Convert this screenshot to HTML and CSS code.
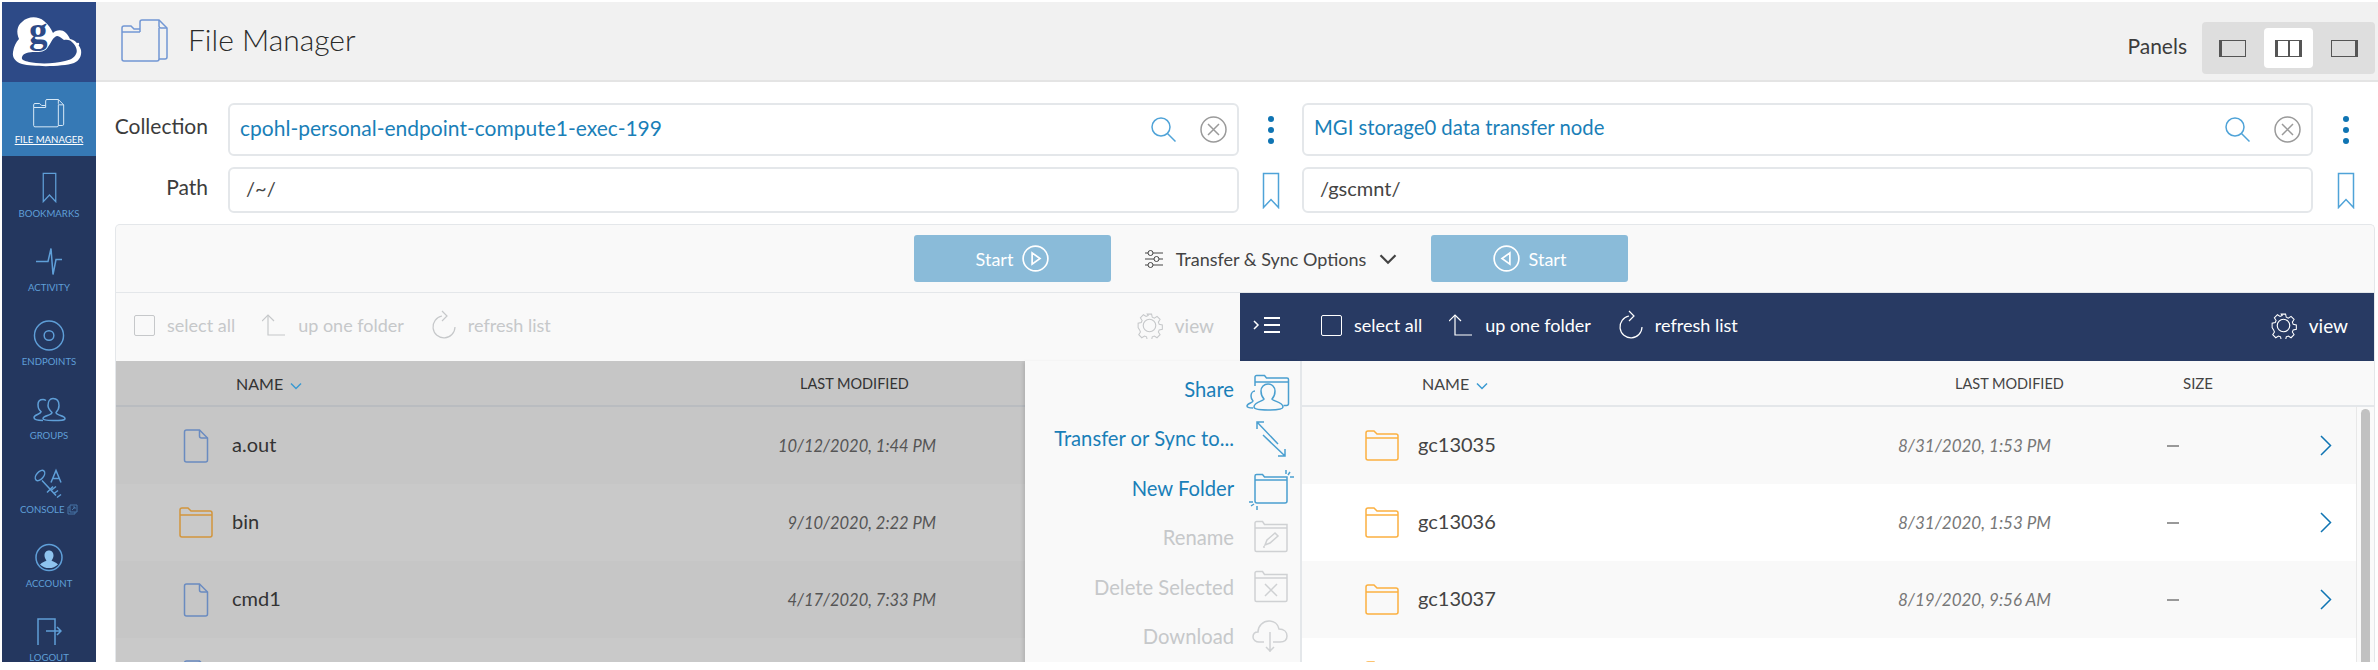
FILE: index.html
```html
<!DOCTYPE html>
<html lang="en">
<head>
  <meta charset="UTF-8" />
  <title>File Manager</title>
  <link rel="stylesheet" href="styles.css">
</head>
<body>
  <svg class="defs" width="0" height="0">
    <symbol id="i-folders" viewBox="0 0 48 44">
      <path d="M1 13V9a2 2 0 0 1 2-2h7l3 3h6" />
      <path d="M1 13h18" />
      <path d="M1 13v27a2 2 0 0 0 2 2h33a2 2 0 0 0 2-2V9" />
      <path d="M19 13V3a2 2 0 0 1 2-2h17l8 8v29a2 2 0 0 1-2 2h-6" />
      <path d="M38 1v6a2 2 0 0 0 2 2h6" />
    </symbol>
    <symbol id="i-file" viewBox="0 0 25 34">
      <path d="M3 1h13l8 8v22a2 2 0 0 1-2 2H3a2 2 0 0 1-2-2V3a2 2 0 0 1 2-2z" />
      <path d="M16 1v6a2 2 0 0 0 2 2h6" />
    </symbol>
    <symbol id="i-folder" viewBox="0 0 34 31">
      <path d="M1 28V3a2 2 0 0 1 2-2h6l3 3h19a2 2 0 0 1 2 2v22a2 2 0 0 1-2 2H3a2 2 0 0 1-2-2z" />
      <path d="M1 8h32" />
    </symbol>
    <symbol id="i-up" viewBox="0 0 24 24">
      <path d="M0 8l6-6 6 6" />
      <path d="M6 2v20h17" />
    </symbol>
    <symbol id="i-refresh" viewBox="0 0 25 30">
      <path d="M11 6a11 11 0 1 0 13 11" />
      <path d="M11 1l5 5-5 5" />
    </symbol>
    <symbol id="i-gear" viewBox="0 0 28 28">
      <circle cx="14" cy="14" r="6.500" />
      <path d="M11.500 1h5l.8 3.600 2.400 1 3.100-2 3.500 3.500-2 3.100 1 2.400 3.600.8v5l-3.600.8-1 2.400 2 3.100-3.500 3.500-3.100-2-2.400 1-.8 3.600h-5l-.8-3.600-2.400-1-3.100 2-3.500-3.500 2-3.100-1-2.400L1 16.500v-5l3.600-.8 1-2.400-2-3.100 3.500-3.500 3.100 2 2.400-1z" transform="translate(1.300 1.300) scale(.9)" />
    </symbol>
    <symbol id="i-bookmark" viewBox="0 0 18 37">
      <path d="M1.500 1.500h15v34L9 27.500l-7.500 8z" />
    </symbol>
    <symbol id="i-chev" viewBox="0 0 12 8">
      <path d="M1 1.500l5 5 5-5" />
    </symbol>
  </svg>

  <div class="app">
    <nav class="sidebar">
      <div class="logo">
        <svg width="94" height="80" viewBox="0 0 94 80">
          <path class="logo-cloud" d="M11 50C12 44 14 40 17 37C14 30 15 24 20 20C26 14 36 14 42 19C47 23 49 27 51 31C54 28 60 27 64 31C66 33 67 35 68 37C73 38 77 42 79 48C80 54 77 59 72 61C60 65 32 65 20 62C14 60 10 56 11 50Z" />
          <path class="logo-hole" d="M20 55C21 51 27 50 33 50C38 50 43 50 46 45C49 41 50 37 53 35C56 32 59 36 62 38C65 37 69 38 71 41C74 44 76 49 74 52C72 56 68 58 63 59C52 62 36 62 27 60C23 59 19 58 20 55Z" />
          <circle class="logo-cloud" cx="76" cy="42" r="1.200" />
          <text class="logo-g" x="27" y="41">g</text>
        </svg>
      </div>
      <a class="nav-item is-active">
        <svg class="nav-icon" width="32" height="29"><use href="#i-folders" /></svg>
        <span class="nav-label">FILE MANAGER</span>
      </a>
      <a class="nav-item">
        <svg class="nav-icon" width="15" height="31"><use href="#i-bookmark" /></svg>
        <span class="nav-label">BOOKMARKS</span>
      </a>
      <a class="nav-item">
        <svg class="nav-icon" width="26" height="28" viewBox="0 0 26 28"><path d="M0 14h12l3-13 2 26 3-15h6" /></svg>
        <span class="nav-label">ACTIVITY</span>
      </a>
      <a class="nav-item">
        <svg class="nav-icon" width="32" height="32" viewBox="0 0 32 32"><circle cx="16" cy="16" r="15" /><circle cx="16" cy="16" r="5" /></svg>
        <span class="nav-label">ENDPOINTS</span>
      </a>
      <a class="nav-item">
        <svg class="nav-icon" width="33" height="24" viewBox="0 0 33 24"><path d="M10 23c-5 0-9-1-9-3 0-3 7-3 7-6-3-2-3-4-3-7 0-3 2-5 5-5 1 0 2 .3 3 1" /><path d="M20 1c4 0 6 3 6 7 0 3-1 5-3 7 0 3 9 3 9 6 0 2-4 2-12 2s-10-1-10-2c0-3 9-3 9-6-2-2-4-4-4-7 0-4 2-7 5-7z" /></svg>
        <span class="nav-label">GROUPS</span>
      </a>
      <a class="nav-item">
        <svg class="nav-icon" width="32" height="30" viewBox="0 0 32 30"><ellipse cx="7" cy="7" rx="3.500" ry="6" transform="rotate(40 7 7)" /><path d="M9 12l14 15M17 21l-3 3M20 18l-3 3M21 25l4-3M18 22l5-4M24 29l4-3" /><path d="M18 14l5-12 5 12M20 10h6" /></svg>
        <span class="nav-label">CONSOLE <svg class="ext" width="11" height="11" viewBox="0 0 11 11"><path d="M3 1h7v7H3zM3 3H1v7h7V8M5 6l3-3M6 3h2v2" /></svg></span>
      </a>
      <a class="nav-item">
        <svg class="nav-icon" width="28" height="28" viewBox="0 0 28 28"><circle cx="14" cy="14" r="13" /><path class="solid" d="M14 7c3 0 4.500 2.300 4.500 5 0 2-1 3.800-2 5 1 1 4.500 1.500 6.500 4a13 13 0 0 1-18 0c2-2.500 5.500-3 6.500-4-1-1.200-2-3-2-5 0-2.700 1.500-5 4.500-5z" /></svg>
        <span class="nav-label">ACCOUNT</span>
      </a>
      <a class="nav-item">
        <svg class="nav-icon" width="25" height="27" viewBox="0 0 25 27"><path d="M1 27V1h17v26M9 13h15M20 9l4 4-4 4" /></svg>
        <span class="nav-label">LOGOUT</span>
      </a>
    </nav>

    <main class="main">
      <header class="topbar">
        <svg class="page-icon" width="48" height="44"><use href="#i-folders" /></svg>
        <h1 class="page-title">File Manager</h1>
        <span class="panels-label">Panels</span>
        <div class="panels">
          <button class="panel-btn"><span class="pane-glyph left-bar"></span></button>
          <button class="panel-btn is-on"><span class="pane-glyph split"></span></button>
          <button class="panel-btn"><span class="pane-glyph right-bar"></span></button>
        </div>
      </header>

      <section class="selectors">
        <label class="field-label">Collection</label>
        <div class="field collection">
          <span class="field-text long">cpohl-personal-endpoint-compute1-exec-199</span>
          <svg class="search" width="25" height="25" viewBox="0 0 25 25"><circle cx="10" cy="10" r="9" /><path d="M16.500 16.500l8 8" /></svg>
          <svg class="clear" width="27" height="27" viewBox="0 0 27 27"><circle cx="13.500" cy="13.500" r="12.500" /><path d="M8 8l11 11M19 8L8 19" /></svg>
        </div>
        <div class="kebab"><i></i><i></i><i></i></div>
        <div class="field collection">
          <span class="field-text">MGI storage0 data transfer node</span>
          <svg class="search" width="25" height="25" viewBox="0 0 25 25"><circle cx="10" cy="10" r="9" /><path d="M16.500 16.500l8 8" /></svg>
          <svg class="clear" width="27" height="27" viewBox="0 0 27 27"><circle cx="13.500" cy="13.500" r="12.500" /><path d="M8 8l11 11M19 8L8 19" /></svg>
        </div>
        <div class="kebab"><i></i><i></i><i></i></div>

        <label class="field-label">Path</label>
        <div class="field path"><span class="path-text">/~/</span></div>
        <div class="mark"><svg width="18" height="37"><use href="#i-bookmark" /></svg></div>
        <div class="field path"><span class="path-text">/gscmnt/</span></div>
        <div class="mark"><svg width="18" height="37"><use href="#i-bookmark" /></svg></div>
      </section>

      <section class="transfer">
        <div class="actions">
          <button class="start">Start
            <svg width="27" height="27" viewBox="0 0 24 24"><circle cx="12" cy="12" r="11" /><path d="M9 7l7 5-7 5z" /></svg>
          </button>
          <div class="options">
            <svg class="sliders" width="18" height="18" viewBox="0 0 18 18"><path d="M0 3h3M8 3h10M0 9h9M14 9h4M0 15h3M8 15h10" /><circle cx="5.500" cy="3" r="2.500" /><circle cx="11.500" cy="9" r="2.500" /><circle cx="5.500" cy="15" r="2.500" /></svg>
            <span>Transfer &amp; Sync Options</span>
            <svg class="opt-chev" width="18" height="12"><use href="#i-chev" /></svg>
          </div>
          <button class="start">
            <svg width="27" height="27" viewBox="0 0 24 24"><circle cx="12" cy="12" r="11" /><path d="M15 7l-7 5 7 5z" /></svg>
            Start
          </button>
        </div>

        <div class="toolbars">
          <div class="toolbar is-off">
            <span class="tool"><span class="check"></span>select all</span>
            <span class="tool"><svg width="24" height="24"><use href="#i-up" /></svg>up one folder</span>
            <span class="tool"><svg width="25" height="30"><use href="#i-refresh" /></svg>refresh list</span>
            <span class="tool view"><svg width="27" height="27"><use href="#i-gear" /></svg>view</span>
          </div>
          <div class="toolbar is-dark">
            <svg class="collapse" width="28" height="18" viewBox="0 0 28 18"><path d="M1 5l4 4-4 4" /><path class="thick" d="M11 2h16M11 9h16M11 16h16" /></svg>
            <span class="tool"><span class="check"></span>select all</span>
            <span class="tool"><svg width="24" height="24"><use href="#i-up" /></svg>up one folder</span>
            <span class="tool"><svg width="25" height="30"><use href="#i-refresh" /></svg>refresh list</span>
            <span class="tool view"><svg width="27" height="27"><use href="#i-gear" /></svg>view</span>
          </div>
        </div>

        <div class="lists">
          <div class="list is-dimmed">
            <div class="row head">
              <span class="c-name">NAME <svg class="sort" width="12" height="8"><use href="#i-chev" /></svg></span>
              <span class="c-date">LAST MODIFIED</span>
            </div>
            <div class="row item"><svg class="ic file" width="25" height="34"><use href="#i-file" /></svg><span class="c-file">a.out</span><span class="c-when">10/12/2020, 1:44 PM</span></div>
            <div class="row item"><svg class="ic folder" width="34" height="31"><use href="#i-folder" /></svg><span class="c-file">bin</span><span class="c-when">9/10/2020, 2:22 PM</span></div>
            <div class="row item"><svg class="ic file" width="25" height="34"><use href="#i-file" /></svg><span class="c-file">cmd1</span><span class="c-when">4/17/2020, 7:33 PM</span></div>
            <div class="row item"><svg class="ic file" width="25" height="34"><use href="#i-file" /></svg></div>
          </div>

          <div class="menu">
            <a class="menu-item">Share
              <svg width="36" height="36" viewBox="0 0 36 36"><path d="M3 15V6a1.500 1.500 0 0 1 1.500-1.500h8l2 2.500H35a1.500 1.500 0 0 1 1.500 1.500v24a2 2 0 0 1-2 2h-3M3 11h33" /><path d="M1 37c-3 0-6-.5-6-2 0-3 6-3 6-5-1-1-2-3-2-5 0-3 2-5 4-5" /><path d="M16 13c4 0 7 3 7 7 0 3-1 6-3 8 0 2 11 3 11 8 0 2-7 3-15 3s-14-1-14-3c0-5 10-6 10-8-2-2-3-5-3-8 0-4 3-7 7-7z" /></svg>
            </a>
            <a class="menu-item">Transfer or Sync to...
              <svg width="36" height="36" viewBox="0 0 36 36"><path d="M5 2l21 22M5 9V2h7M11 15l22 21M33 29v7h-7" /></svg>
            </a>
            <a class="menu-item">New Folder
              <svg width="36" height="38" viewBox="0 0 36 38"><path d="M3 32V7a1.500 1.500 0 0 1 1.500-1.500h6l2 2.500H35v24a2 2 0 0 1-2 2H5a2 2 0 0 1-2-2zM3 11h32" /><path d="M34 1v4M38 3l-2 3M42 8h-4M-3 33h4M-1 37l3-2M5 37v4" /></svg>
            </a>
            <a class="menu-item is-off">Rename
              <svg width="36" height="34" viewBox="0 0 36 34"><path d="M3 30V3a1.500 1.500 0 0 1 1.500-1.500h6l2 3H35V30a1.500 1.500 0 0 1-1.500 1.500h-29A1.500 1.500 0 0 1 3 30zM3 8h32" /><path d="M13 25l2-5 8-7 3 3-8 7zM11 27h2" /></svg>
            </a>
            <a class="menu-item is-off">Delete Selected
              <svg width="36" height="34" viewBox="0 0 36 34"><path d="M3 30V3a1.500 1.500 0 0 1 1.500-1.500h6l2 3H35V30a1.500 1.500 0 0 1-1.500 1.500h-29A1.500 1.500 0 0 1 3 30zM3 8h32" /><path d="M13 14l12 12M25 14L13 26" /></svg>
            </a>
            <a class="menu-item is-off">Download
              <svg width="36" height="34" viewBox="0 0 36 34"><path d="M12 23H7c-3 0-6-2-6-5s2-5 5-5c0-6 5-11 11-11 5 0 9 3 10 8 5 0 8 3 8 7s-3 6-7 6h-7" /><path d="M18 13v20M14 28l4 4 4-4" /></svg>
            </a>
          </div>

          <div class="list">
            <div class="row head">
              <span class="c-name">NAME <svg class="sort" width="12" height="8"><use href="#i-chev" /></svg></span>
              <span class="c-date">LAST MODIFIED</span>
              <span class="c-size">SIZE</span>
            </div>
            <div class="rows">
              <div class="row item"><svg class="ic folder" width="34" height="31"><use href="#i-folder" /></svg><span class="c-file">gc13035</span><span class="c-when">8/31/2020, 1:53 PM</span><span class="c-dash"></span><svg class="go" width="12" height="21" viewBox="0 0 12 21"><path d="M1 1l9.500 9.500L1 20" /></svg></div>
              <div class="row item"><svg class="ic folder" width="34" height="31"><use href="#i-folder" /></svg><span class="c-file">gc13036</span><span class="c-when">8/31/2020, 1:53 PM</span><span class="c-dash"></span><svg class="go" width="12" height="21" viewBox="0 0 12 21"><path d="M1 1l9.500 9.500L1 20" /></svg></div>
              <div class="row item"><svg class="ic folder" width="34" height="31"><use href="#i-folder" /></svg><span class="c-file">gc13037</span><span class="c-when">8/19/2020, 9:56 AM</span><span class="c-dash"></span><svg class="go" width="12" height="21" viewBox="0 0 12 21"><path d="M1 1l9.500 9.500L1 20" /></svg></div>
              <div class="row item"><svg class="ic folder" width="34" height="31"><use href="#i-folder" /></svg></div>
              <div class="scroll"><div class="thumb"></div></div>
            </div>
          </div>
        </div>
      </section>
    </main>
  </div>
</body>
</html>
```

FILE: styles.css
```css
* {
  box-sizing: border-box;
}
html, body {
  margin: 0;
  height: 100%;
  background: white;
  overflow: hidden;
}
body {
  font-family: Lato, "Open Sans", sans-serif;
  color: #444;
  padding: 2px 0 0 2px;
}
svg {
  fill: none;
  stroke: currentColor;
  stroke-width: 1.5;
  flex: none;
}
.defs {
  position: absolute;
}
button {
  font: inherit;
  border: none;
}
.app {
  display: flex;
  height: 660px;
  overflow: hidden;
}

/* sidebar */
.sidebar {
  width: 94px;
  flex: none;
  background: #24375f;
}
.logo {
  height: 80px;
  background: #2d4a87;
}
.logo svg {
  stroke: none;
  display: block;
}
.logo-cloud {
  fill: white;
}
.logo-hole {
  fill: #2d4a87;
}
.logo-g {
  font-family: "Liberation Serif", serif;
  font-weight: bold;
  font-size: 37px;
  fill: #2d4a87;
}
.nav-item {
  height: 74px;
  display: flex;
  flex-direction: column;
  align-items: center;
  color: #5f9fd8;
  padding-top: 16px;
}
.nav-item .nav-icon {
  height: 31px;
}
.nav-label {
  font-size: 9.600px;
  margin-top: 5px;
  line-height: 12px;
  white-space: nowrap;
}
.solid {
  fill: #8fc4ef;
  stroke: none;
}
.ext {
  vertical-align: -2px;
  opacity: .6;
  stroke-width: 1;
}
.nav-item.is-active {
  background: #3679b5;
  color: white;
}
.is-active .nav-icon {
  color: #d7e8f6;
}
.is-active .nav-label {
  text-decoration: underline;
}

/* main */
.main {
  flex: 1;
  min-width: 0;
}
.topbar {
  height: 80px;
  background: #f1f1f1;
  border-bottom: 2px solid #e4e4e4;
  display: flex;
  align-items: center;
  padding: 0 3px 0 25px;
}
.page-icon {
  color: #7297d4;
}
.page-title {
  font-size: 30px;
  font-weight: 300;
  color: #2a2a2a;
  margin: 0 0 4px 19px;
  flex: 1;
}
.panels-label {
  font-size: 21px;
  color: #3c3c3c;
  margin: 9px 15px 0 0;
}
.panels {
  width: 173px;
  height: 52px;
  background: #dedede;
  border-radius: 4px;
  display: flex;
  align-items: center;
  justify-content: center;
  gap: 7px;
  align-self: flex-end;
  margin-bottom: 6px;
}
.panel-btn {
  width: 49px;
  height: 40px;
  background: transparent;
  border-radius: 4px;
  display: flex;
  align-items: center;
  justify-content: center;
  padding: 0;
}
.panel-btn.is-on {
  background: white;
}
.pane-glyph {
  display: block;
  width: 27px;
  height: 17px;
  border: 1px solid #555;
}
.left-bar {
  border-left-width: 3px;
}
.right-bar {
  border-right-width: 3px;
}
.split {
  border-left-width: 3px;
  border-right-width: 3px;
  background: linear-gradient(#555, #555) center / 2px 100% no-repeat;
}

/* collection and path */
.selectors {
  display: grid;
  grid-template-columns: 132px 1011px 63px 1011px 1fr;
  grid-template-rows: 53px 46px;
  row-gap: 11px;
  padding-top: 21px;
}
.field-label {
  font-size: 21px;
  color: #3c3c3c;
  text-align: right;
  padding: 0 20px 8px 0;
  align-self: center;
}
.field {
  background: white;
  border: 2px solid #e4e7ea;
  border-radius: 6px;
  display: flex;
  align-items: center;
  padding: 0 10px 0 10px;
  font-size: 20px;
}
.field.path {
  color: #444;
  padding-left: 16px;
}
.path-text {
  margin-top: -4px;
}
.field-text {
  color: #1a7fb8;
  flex: 1;
  font-size: 20.300px;
  margin-top: -5px;
}
.field-text.long {
  font-size: 21px;
}
.search {
  color: #4fa3d8;
  margin-right: 24px;
}
.clear {
  color: #9a9a9a;
}
.kebab {
  display: flex;
  flex-direction: column;
  align-items: center;
  justify-content: center;
  gap: 5px;
}
.kebab i {
  width: 6px;
  height: 6px;
  border-radius: 50%;
  background: #0f74b3;
}
.mark {
  display: flex;
  align-items: center;
  justify-content: center;
  color: #4fa3d8;
}

/* transfer panel */
.transfer {
  margin: 11px 3px 0 19px;
  background: #f9f9f9;
  border: 1px solid #e4e7ea;
  border-bottom: none;
  border-radius: 5px 5px 0 0;
}
.actions {
  height: 67px;
  display: flex;
  align-items: center;
  padding-left: 798px;
}
.start {
  width: 197px;
  height: 47px;
  background: #8abbd9;
  color: white;
  border-radius: 3px;
  font-size: 18px;
  display: flex;
  align-items: center;
  justify-content: center;
  gap: 9px;
}
.options {
  width: 320px;
  display: flex;
  align-items: center;
  justify-content: center;
  font-size: 18px;
  color: #444;
  gap: 13px;
}
.sliders {
  stroke-width: 1;
}
.toolbars {
  display: grid;
  grid-template-columns: 1124px 1fr;
  height: 69px;
  border-top: 1px solid #e4e7ea;
}
.toolbar {
  display: flex;
  align-items: center;
  font-size: 18px;
  gap: 27px;
  padding: 0 26px 4px 18px;
}
.toolbar.is-off {
  color: #c6c8ca;
}
.toolbar.is-dark {
  background: #283a63;
  color: white;
  padding-left: 13px;
}
.collapse {
  margin-right: 13px;
}
.thick {
  stroke-width: 2;
}
.tool {
  display: flex;
  align-items: center;
  gap: 12px;
  white-space: nowrap;
}
.tool svg {
  stroke-width: 1.2;
}
.tool.view {
  margin-left: auto;
  font-size: 19px;
}
.check {
  width: 21px;
  height: 21px;
  border: 1px solid currentColor;
  border-radius: 2px;
}

/* file lists */
.lists {
  display: grid;
  grid-template-columns: 909px 277px 1fr;
  height: 310px;
  align-items: start;
}
.list {
  background: white;
  min-width: 0;
}
.row {
  display: flex;
  align-items: center;
}
.head {
  height: 46px;
  font-size: 15px;
  background: #f9f9f9;
  border-bottom: 2px solid #e4e7ea;
  color: #444;
}
.c-name {
  flex: none;
  width: 533px;
  margin-left: 120px;
  font-size: 16px;
  white-space: nowrap;
}
.sort {
  color: #3a9ad2;
  margin-left: 3px;
}
.c-date {
  flex: none;
  width: 228px;
  font-size: 14.500px;
  white-space: nowrap;
}
.item {
  height: 77px;
  background: white;
  font-size: 20px;
  position: relative;
}
.item:nth-child(even) {
  background: #f9f9f9;
}
.rows {
  position: relative;
}
.rows .item:nth-child(odd) {
  background: #f9f9f9;
}
.rows .item:nth-child(even) {
  background: white;
}
.ic {
  width: 34px;
  margin-left: 63px;
}
.ic.folder {
  color: #fbb040;
}
.ic.file {
  color: #7297d4;
}
.c-file {
  margin: -3px 0 0 19px;
  width: 480px;
}
.c-when {
  font-style: italic;
  font-size: 17px;
  color: #777;
  white-space: nowrap;
}
.c-dash {
  width: 12px;
  height: 2px;
  background: #999;
  position: absolute;
  left: 865px;
}
.go {
  color: #0f74b3;
  position: absolute;
  left: 1018px;
}
.scroll {
  position: absolute;
  top: 0;
  right: 0;
  width: 18px;
  height: 310px;
  background: #fafafa;
  border-left: 1px solid #e8e8e8;
  padding: 2px 0 0 4px;
}
.thumb {
  width: 9px;
  height: 300px;
  background: #c1c1c1;
  border-radius: 5px;
}

/* grey overlay on the left list while the menu is open */
.is-dimmed .head {
  background: #c6c6c6;
  border-bottom-color: #b9bcc0;
  color: #333;
}
.is-dimmed .c-name {
  width: 564px;
}
.is-dimmed .item {
  background: #c9c9c9;
  color: #333;
}
.is-dimmed .item:nth-child(even) {
  background: #c6c6c6;
}
.is-dimmed .c-when {
  color: #555;
  font-size: 16.500px;
  width: 224px;
  text-align: right;
}
.is-dimmed .ic.folder {
  color: #d2953c;
}
.is-dimmed .ic.file {
  color: #6a8bc0;
}

/* actions menu */
.menu {
  background: #f9f9f9;
  border-right: 2px solid #e4e7ea;
  box-shadow: -3px 0 3px -1px rgba(0, 0, 0, .1);
  height: 310px;
  display: flex;
  flex-direction: column;
  position: relative;
  padding-top: 3px;
}
.menu-item {
  height: 49.500px;
  flex: none;
  display: flex;
  align-items: center;
  justify-content: flex-end;
  gap: 18px;
  padding-right: 12px;
  font-size: 20.200px;
  color: #1a7fb8;
}
.menu-item svg {
  color: #4a9fd0;
  overflow: visible;
  width: 36px;
}
.menu-item.is-off {
  color: #c6c8ca;
}
.menu-item.is-off svg {
  color: #cfd1d3;
}
```
